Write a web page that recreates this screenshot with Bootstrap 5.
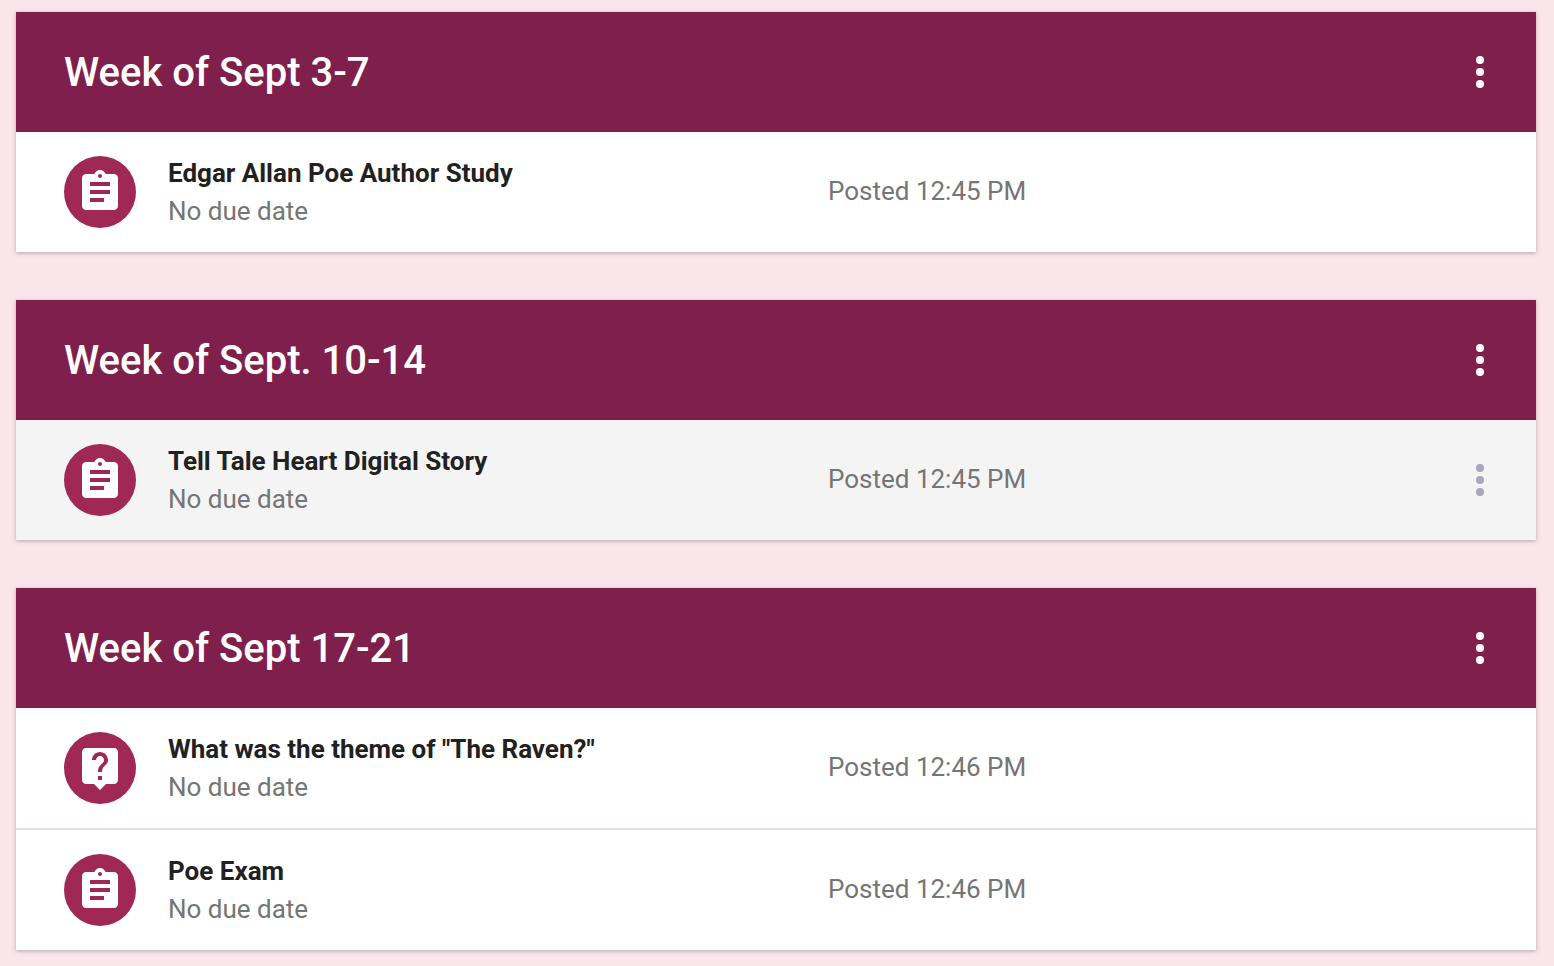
<!DOCTYPE html>
<html lang="en">
<head>
<meta charset="utf-8">
<meta name="viewport" content="width=device-width, initial-scale=1">
<title>Classwork</title>
<link rel="stylesheet" href="https://cdn.jsdelivr.net/npm/bootstrap@5.3.0/dist/css/bootstrap.min.css">
<style>
body { background: #fae5eb; font-family: Roboto, "Liberation Sans", sans-serif; color: #212121; }
.board { padding: 12px 18px 16px 16px; gap: 48px; }
.topic { box-shadow: 0 1px 4px rgba(0,0,0,.28); background: #fff; }
.topic-head { background: #7f1f4b; min-height: 120px; padding: 0 32px 0 48px; }
.topic-title { font-size: 40px; line-height: 48px; font-weight: 500; padding-top: 2px; }
.work-item { min-height: 120px; padding: 0 32px 0 48px; }
.work-item + .work-item { border-top: 2px solid #ecdce2; min-height: 122px; }
.work-item.hovered { background: #f4f4f4; }
.work-icon { width: 72px; height: 72px; background: #a02855; margin-right: 32px; }
.work-text { width: 660px; }
.work-name { font-size: 26px; line-height: 38px; font-weight: 700; color: #212121; }
.work-note { font-size: 26px; line-height: 38px; color: #757575; }
.work-posted { padding-bottom: 2px; }
.more { width: 48px; height: 48px; color: #fff; }
.more.muted { color: #aaa5bf; }
</style>
</head>
<body>
<svg class="d-none" aria-hidden="true">
  <symbol id="task" viewBox="0 0 24 24"><path fill="#fff" d="M19 3h-4.18C14.400 1.840 13.300 1 12 1s-2.400.84-2.820 2H5c-1.100 0-2 .9-2 2v14c0 1.100.9 2 2 2h14c1.100 0 2-.9 2-2V5c0-1.100-.9-2-2-2zm-7 0c.55 0 1 .45 1 1s-.45 1-1 1-1-.45-1-1 .45-1 1-1zm2 14H7v-2h7v2zm3-4H7v-2h10v2zm0-4H7V7h10v2z"/></symbol>
  <symbol id="question" viewBox="0 0 24 24"><path fill="#fff" d="M19 2H5c-1.110 0-2 .9-2 2v14c0 1.100.89 2 2 2h4l3 3 3-3h4c1.100 0 2-.9 2-2V4c0-1.100-.9-2-2-2zm-6 16h-2v-2h2v2zm2.070-7.750l-.9.920C13.450 11.900 13 12.500 13 14h-2v-.5c0-1.100.45-2.100 1.170-2.830l1.240-1.260c.37-.36.59-.86.59-1.410 0-1.100-.9-2-2-2s-2 .9-2 2H8c0-2.210 1.790-4 4-4s4 1.790 4 4c0 .88-.36 1.680-.93 2.250z"/></symbol>
  <symbol id="dots" viewBox="0 0 48 48"><g fill="currentColor"><circle cx="24" cy="12" r="4"/><circle cx="24" cy="24" r="4"/><circle cx="24" cy="36" r="4"/></g></symbol>
</svg>
<main class="board d-flex flex-column">
  <section class="topic">
    <header class="topic-head d-flex align-items-center justify-content-between">
      <h2 class="topic-title text-white m-0">Week of Sept 3-7</h2>
      <button type="button" class="more btn p-0 border-0 d-flex" aria-label="Topic options"><svg width="48" height="48"><use href="#dots"/></svg></button>
    </header>
    <article class="work-item d-flex align-items-center">
      <span class="work-icon rounded-circle d-flex align-items-center justify-content-center flex-shrink-0"><svg width="48" height="48"><use href="#task"/></svg></span>
      <div class="work-text"><h3 class="work-name m-0">Edgar Allan Poe Author Study</h3><p class="work-note m-0">No due date</p></div>
      <span class="work-note work-posted">Posted 12:45 PM</span>
    </article>
  </section>
  <section class="topic">
    <header class="topic-head d-flex align-items-center justify-content-between">
      <h2 class="topic-title text-white m-0">Week of Sept. 10-14</h2>
      <button type="button" class="more btn p-0 border-0 d-flex" aria-label="Topic options"><svg width="48" height="48"><use href="#dots"/></svg></button>
    </header>
    <article class="work-item hovered d-flex align-items-center">
      <span class="work-icon rounded-circle d-flex align-items-center justify-content-center flex-shrink-0"><svg width="48" height="48"><use href="#task"/></svg></span>
      <div class="work-text"><h3 class="work-name m-0">Tell Tale Heart Digital Story</h3><p class="work-note m-0">No due date</p></div>
      <span class="work-note work-posted">Posted 12:45 PM</span>
      <button type="button" class="more muted btn p-0 border-0 d-flex ms-auto" aria-label="Assignment options"><svg width="48" height="48"><use href="#dots"/></svg></button>
    </article>
  </section>
  <section class="topic">
    <header class="topic-head d-flex align-items-center justify-content-between">
      <h2 class="topic-title text-white m-0">Week of Sept 17-21</h2>
      <button type="button" class="more btn p-0 border-0 d-flex" aria-label="Topic options"><svg width="48" height="48"><use href="#dots"/></svg></button>
    </header>
    <article class="work-item d-flex align-items-center">
      <span class="work-icon rounded-circle d-flex align-items-center justify-content-center flex-shrink-0"><svg width="48" height="48"><use href="#question"/></svg></span>
      <div class="work-text"><h3 class="work-name m-0">What was the theme of "The Raven?"</h3><p class="work-note m-0">No due date</p></div>
      <span class="work-note work-posted">Posted 12:46 PM</span>
    </article>
    <article class="work-item d-flex align-items-center">
      <span class="work-icon rounded-circle d-flex align-items-center justify-content-center flex-shrink-0"><svg width="48" height="48"><use href="#task"/></svg></span>
      <div class="work-text"><h3 class="work-name m-0">Poe Exam</h3><p class="work-note m-0">No due date</p></div>
      <span class="work-note work-posted">Posted 12:46 PM</span>
    </article>
  </section>
</main>
<script src="https://cdn.jsdelivr.net/npm/bootstrap@5.3.0/dist/js/bootstrap.bundle.min.js"></script>
</body>
</html>
